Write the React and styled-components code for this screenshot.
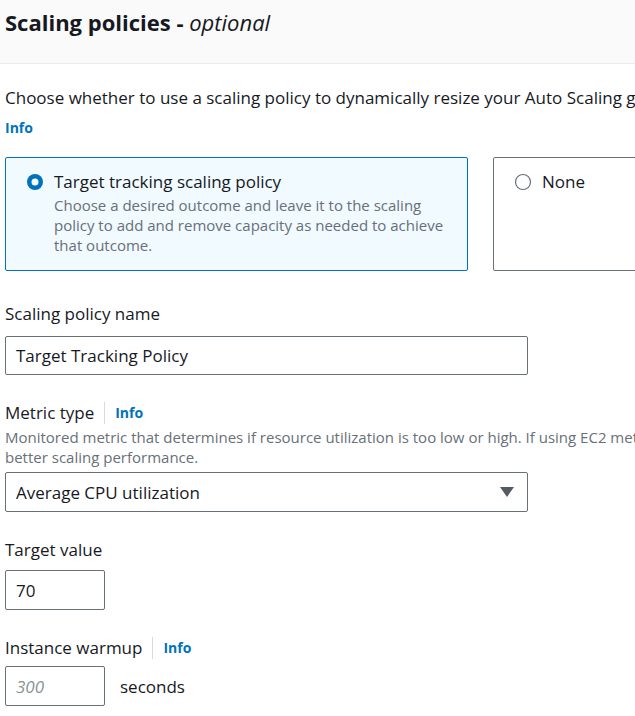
import React from "react";
import styled, { createGlobalStyle } from "styled-components";

const Global = createGlobalStyle`
  html, body { margin: 0; padding: 0; background: #ffffff; }
  body { font-family: "Open Sans", "Noto Sans", Arial, sans-serif; color: #16191f; overflow: hidden; }
  * { box-sizing: border-box; }
`;

const Page = styled.div`
  width: 635px;
  height: 716px;
  overflow: hidden;
`;

const Header = styled.div`
  height: 64px;
  background: #fafafa;
  border-bottom: 1px solid #eaeded;
  padding: 8px 0 0 5px;
`;

const Title = styled.h2`
  margin: 0;
  font-size: 22px;
  font-weight: 700;
  line-height: 28px;
  white-space: nowrap;
  em { font-weight: 400; font-style: italic; }
`;

const Body = styled.div`
  padding: 20px 0 0 5px;
  display: flex;
  flex-direction: column;
`;

const Intro = styled.p`
  margin: 0;
  font-size: 17px;
  line-height: 28px;
  white-space: nowrap;
`;

const InfoLine = styled.div`
  margin-top: 6px;
  line-height: 24px;
  display: flex;
  align-items: center;
`;

const InfoLink = styled.a`
  color: #0073bb;
  font-weight: 700;
  font-size: 14px;
  line-height: 20px;
  text-decoration: none;
  cursor: pointer;
`;

const Tiles = styled.div`
  display: flex;
  gap: 25px;
  margin-top: 19px;
  width: 720px;
`;

const Tile = styled.div`
  flex: 0 0 ${(p) => p.$w}px;
  height: 114px;
  border: 1px solid ${(p) => (p.$selected ? "#0073bb" : "#687078")};
  background: ${(p) => (p.$selected ? "#f1faff" : "#ffffff")};
  border-radius: 2px;
  padding: 13px 20px 0 20px;
  display: flex;
  gap: 10px;
  align-items: flex-start;
`;

const RadioWrap = styled.span`
  flex: 0 0 18px;
  margin-top: 2px;
  display: flex;
`;

const TileText = styled.div`
  display: flex;
  flex-direction: column;
`;

const TileLabel = styled.div`
  font-size: 17px;
  line-height: 22px;
`;

const TileDesc = styled.div`
  font-size: 15px;
  line-height: 20px;
  color: #687078;
  margin-top: 2px;
`;

const Field = styled.div`
  display: flex;
  flex-direction: column;
  margin-top: ${(p) => p.$mt}px;
`;

const LabelRow = styled.div`
  display: flex;
  align-items: center;
  height: 24px;
`;

const Label = styled.label`
  font-size: 17px;
  line-height: 24px;
`;

const Divider = styled.span`
  width: 1px;
  height: 22px;
  background: #d5dbdb;
  margin: 0 10px 0 10px;
`;

const Hint = styled.div`
  margin-top: 2px;
  font-size: 15px;
  line-height: 20px;
  color: #687078;
  white-space: nowrap;
`;

const Input = styled.div`
  width: ${(p) => p.$w}px;
  height: ${(p) => p.$h}px;
  border: 1px solid #687078;
  border-radius: 2px;
  margin-top: ${(p) => p.$mt || 0}px;
  padding: 0 13px 0 10px;
  display: flex;
  align-items: center;
  justify-content: space-between;
  font-size: 17px;
  color: ${(p) => (p.$placeholder ? "#879596" : "#16191f")};
  font-style: ${(p) => (p.$placeholder ? "italic" : "normal")};
`;

const InputRow = styled.div`
  display: flex;
  align-items: center;
  gap: 15px;
  margin-top: 6px;
`;

const Unit = styled.span`
  font-size: 17px;
`;

const Radio = ({ checked }) =>
  checked ? (
    <svg width="18" height="18" viewBox="0 0 18 18">
      <circle cx="9" cy="9" r="8" fill="#0073bb" />
      <circle cx="9" cy="9" r="3.5" fill="#ffffff" />
    </svg>
  ) : (
    <svg width="18" height="18" viewBox="0 0 18 18">
      <circle cx="9" cy="9" r="7.5" fill="#ffffff" stroke="#687078" strokeWidth="1.2" />
    </svg>
  );

const Caret = () => (
  <svg width="14" height="10" viewBox="0 0 14 10">
    <polygon points="0,0 14,0 7,10" fill="#545b64" />
  </svg>
);

export default function App() {
  return (
    <Page>
      <Global />
      <Header>
        <Title>
          Scaling policies - <em>optional</em>
        </Title>
      </Header>
      <Body>
        <Intro>
          Choose whether to use a scaling policy to dynamically resize your Auto Scaling group to meet changes in demand.
        </Intro>
        <InfoLine>
          <InfoLink>Info</InfoLink>
        </InfoLine>
        <Tiles>
          <Tile $selected $w={463}>
            <RadioWrap>
              <Radio checked />
            </RadioWrap>
            <TileText>
              <TileLabel>Target tracking scaling policy</TileLabel>
              <TileDesc>
                Choose a desired outcome and leave it to the scaling policy to add and remove capacity as needed to achieve that outcome.
              </TileDesc>
            </TileText>
          </Tile>
          <Tile $w={220}>
            <RadioWrap>
              <Radio />
            </RadioWrap>
            <TileText>
              <TileLabel>None</TileLabel>
            </TileText>
          </Tile>
        </Tiles>
        <Field $mt={31}>
          <LabelRow>
            <Label>Scaling policy name</Label>
          </LabelRow>
          <Input $w={523} $h={39} $mt={10}>Target Tracking Policy</Input>
        </Field>
        <Field $mt={26}>
          <LabelRow>
            <Label>Metric type</Label>
            <Divider />
            <InfoLink>Info</InfoLink>
          </LabelRow>
          <Hint>
            Monitored metric that determines if resource utilization is too low or high. If using EC2 metrics, consider enabling detailed monitoring for
            <br />
            better scaling performance.
          </Hint>
          <Input $w={523} $h={40} $mt={5}>
            Average CPU utilization
            <Caret />
          </Input>
        </Field>
        <Field $mt={26}>
          <LabelRow>
            <Label>Target value</Label>
          </LabelRow>
          <Input $w={100} $h={40} $mt={8}>70</Input>
        </Field>
        <Field $mt={26}>
          <LabelRow>
            <Label>Instance warmup</Label>
            <Divider />
            <InfoLink>Info</InfoLink>
          </LabelRow>
          <InputRow>
            <Input $w={100} $h={40} $placeholder>300</Input>
            <Unit>seconds</Unit>
          </InputRow>
        </Field>
      </Body>
    </Page>
  );
}
